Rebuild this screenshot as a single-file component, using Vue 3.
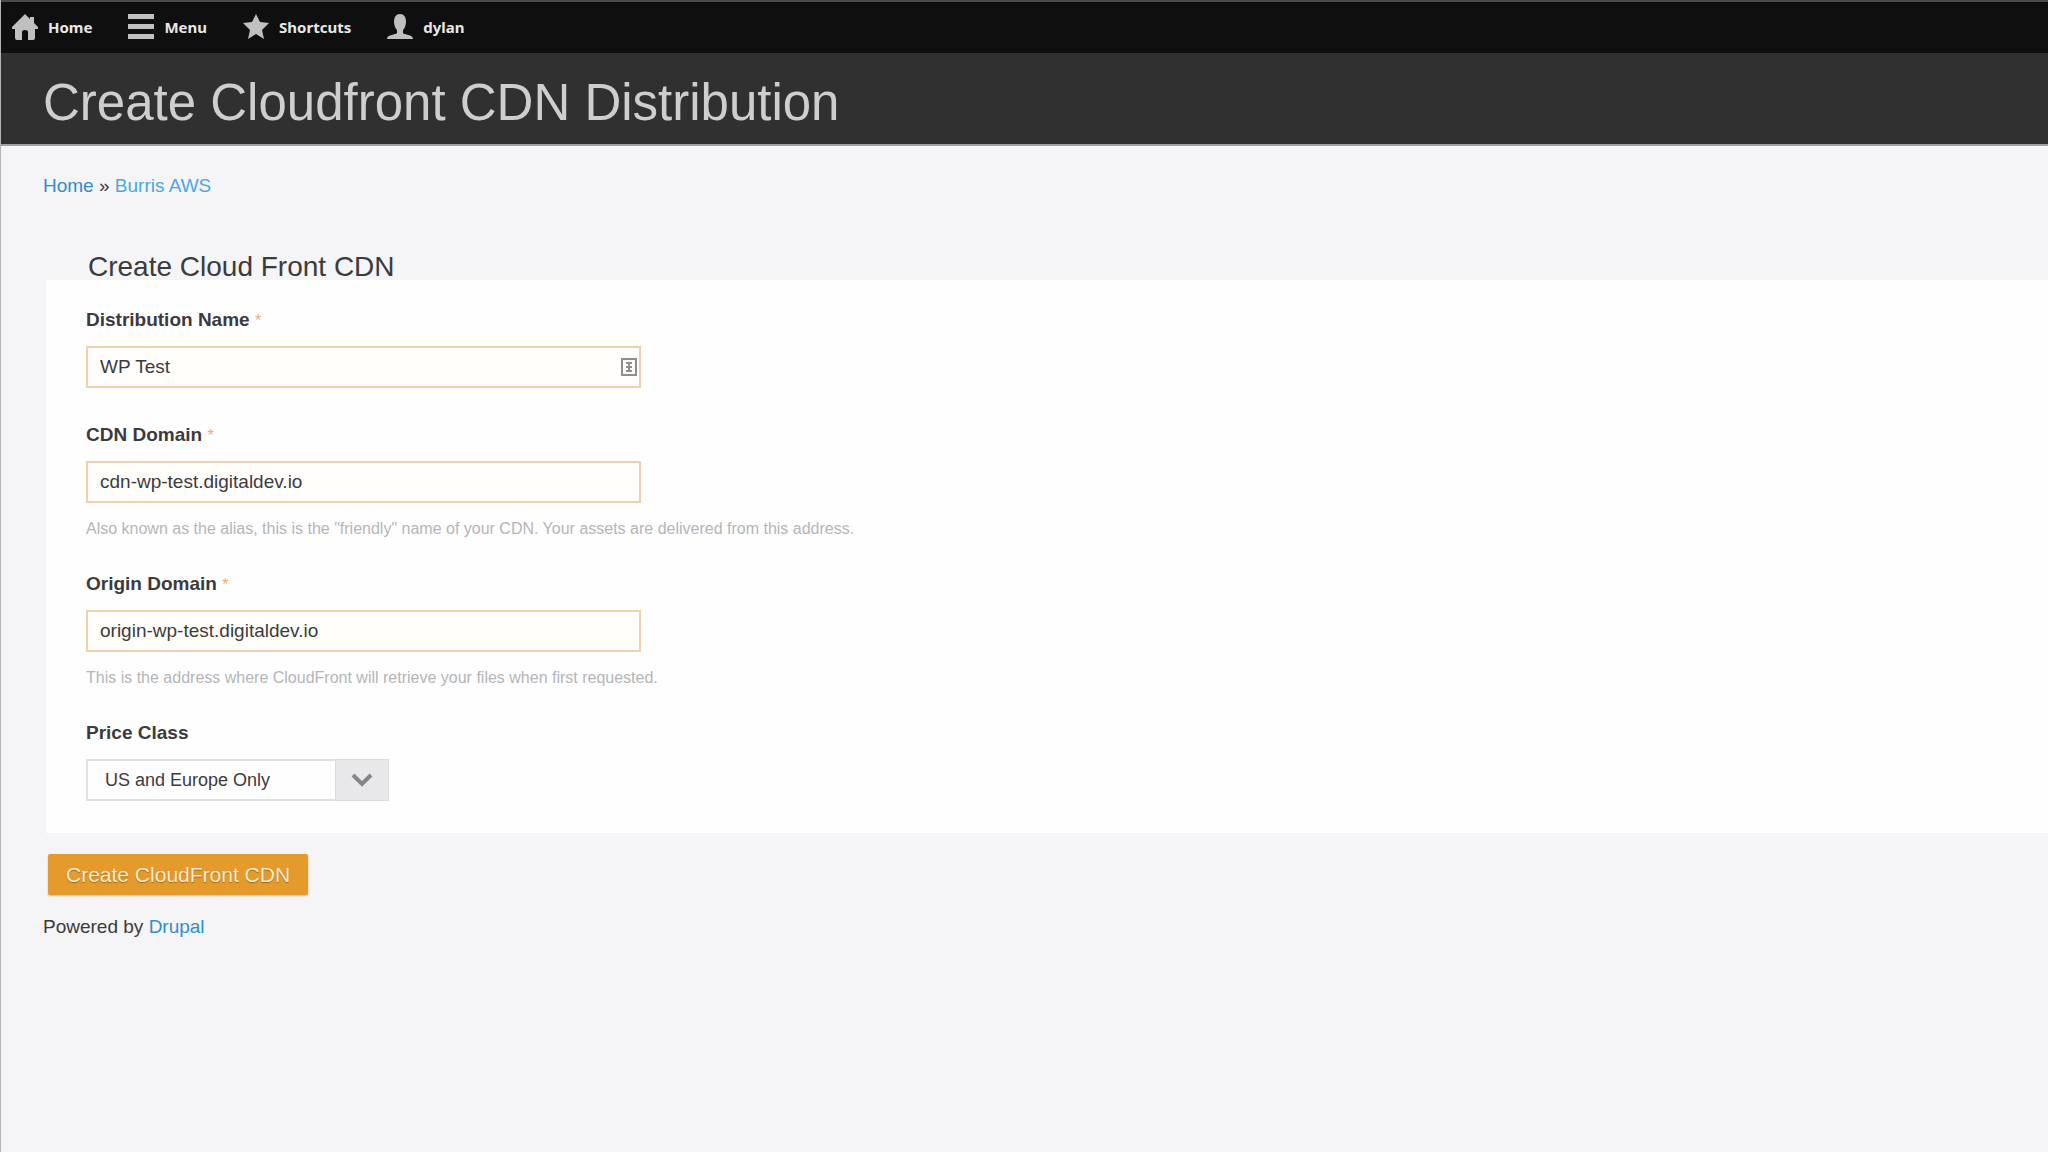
<template>
  <div class="page">
    <nav class="toolbar">
      <a v-for="item in toolbarItems" :key="item.label" href="#" class="toolbar-item">
        <svg class="toolbar-icon" viewBox="0 0 26 26" aria-hidden="true">
          <path :d="item.icon" fill-rule="evenodd" />
        </svg>
        <span>{{ item.label }}</span>
      </a>
    </nav>

    <header class="page-header">
      <h1>Create Cloudfront CDN Distribution</h1>
    </header>

    <main class="content">
      <div class="breadcrumb">
        <a href="#">Home</a> » <a href="#" class="crumb-light">Burris AWS</a>
      </div>

      <form @submit.prevent>
        <h2 class="panel-title">Create Cloud Front CDN</h2>
        <section class="panel">
          <div v-for="field in fields" :key="field.id" class="field">
            <label :for="field.id">{{ field.label }} <span class="required">*</span></label>
            <div class="input-wrap">
              <input :id="field.id" v-model="field.value" type="text" />
              <svg v-if="field.autofill" class="autofill" viewBox="0 0 16 18" aria-hidden="true">
                <rect x="1" y="1" width="14" height="16" />
                <path d="M5 5h6M8 4v10M5 9h6M5 13h6" />
              </svg>
            </div>
            <p v-if="field.help" class="help">{{ field.help }}</p>
          </div>

          <div class="field">
            <label for="price-class">Price Class</label>
            <div class="select-wrap">
              <select id="price-class" v-model="priceClass">
                <option>US and Europe Only</option>
                <option>All Edge Locations</option>
              </select>
              <span class="select-arrow">
                <svg viewBox="0 0 22 14" aria-hidden="true">
                  <path d="M2 2l9 9 9-9" />
                </svg>
              </span>
            </div>
          </div>
        </section>

        <button type="submit" class="submit-btn">Create CloudFront CDN</button>
      </form>

      <footer class="powered">Powered by <a href="#">Drupal</a></footer>
    </main>
  </div>
</template>

<script setup>
import { ref } from "vue";

const toolbarItems = [
  {
    label: "Home",
    icon: "M13 0L18 5V3H22V9L26 13V15H23V24Q23 26 21 26H16V18Q16 16 13 16Q10 16 10 18V26H5Q3 26 3 24V15H0V13Z",
  },
  {
    label: "Menu",
    icon: "M0 0H26V5H0ZM0 10H26V15H0ZM0 20H26V25H0Z",
  },
  {
    label: "Shortcuts",
    icon: "M13 0L17 8L26 9L19 16L21 25L13 20L5 25L7 16L0 9L9 8Z",
  },
  {
    label: "dylan",
    icon: "M13 0C17 0 19 3 19 8C19 12 17 15 16 16V19C17 21 26 20 26 25H0C0 20 9 21 10 19V16C9 15 7 12 7 8C7 3 9 0 13 0Z",
  },
];

const fields = ref([
  {
    id: "distribution-name",
    label: "Distribution Name",
    value: "WP Test",
    autofill: true,
  },
  {
    id: "cdn-domain",
    label: "CDN Domain",
    value: "cdn-wp-test.digitaldev.io",
    help: 'Also known as the alias, this is the "friendly" name of your CDN. Your assets are delivered from this address.',
  },
  {
    id: "origin-domain",
    label: "Origin Domain",
    value: "origin-wp-test.digitaldev.io",
    help: "This is the address where CloudFront will retrieve your files when first requested.",
  },
]);

const priceClass = ref("US and Europe Only");
</script>

<style>
body {
  margin: 0;
  background: #f5f4f7;
}
</style>

<style scoped>
.page {
  box-sizing: border-box;
  min-height: 100vh;
  border-left: 1px solid #b4b4b4;
  background: #f5f4f7;
  color: #3b3b3d;
  font-family: "Liberation Sans", Arial, sans-serif;
  font-size: 19px;
  line-height: 24px;
}

a {
  color: #2f8fcb;
  text-decoration: none;
}

.toolbar {
  display: flex;
  gap: 36px;
  box-sizing: border-box;
  height: 53px;
  padding: 0 11px 2px;
  border-top: 2px solid #4a4a4a;
  background: #0f0f0f;
}

.toolbar-item {
  display: flex;
  align-items: center;
  gap: 10px;
  color: #e8e8e8;
  font-family: "Noto Sans", "Open Sans", sans-serif;
  font-size: 15px;
  font-weight: 700;
}

.toolbar-icon {
  width: 26px;
  height: 26px;
  fill: #c0c0c0;
}

.page-header {
  box-sizing: border-box;
  height: 93px;
  padding: 18px 42px 0;
  border-bottom: 2px solid #a0a0a0;
  background: #303030;
}

h1 {
  margin: 0;
  color: #cecece;
  font-size: 51px;
  font-weight: 400;
  line-height: 64px;
}

.content {
  padding: 28px 0 0 42px;
}

.crumb-light {
  color: #4aa9de;
}

.panel-title {
  margin: 56px 0 0 45px;
  font-size: 28px;
  font-weight: 400;
  line-height: 26px;
}

.panel {
  margin-left: 3px;
  padding: 28px 40px 32px;
  background: #fefefe;
}

.field + .field {
  margin-top: 35px;
}

.field:has(.help) + .field {
  margin-top: 31px;
}

label {
  display: block;
  margin-bottom: 14px;
  font-size: 19px;
  font-weight: 700;
}

.required {
  color: #f0a873;
  font-size: 16px;
  font-weight: 400;
  line-height: 1;
}

.input-wrap {
  position: relative;
  max-width: 555px;
}

input {
  display: block;
  box-sizing: border-box;
  width: 100%;
  height: 42px;
  padding: 0 12px;
  border: 2px solid #edd3ac;
  border-radius: 0;
  background: #fffefb;
  color: #3b3b3d;
  font-family: inherit;
  font-size: 19px;
}

.autofill {
  position: absolute;
  top: 12px;
  right: 4px;
  width: 16px;
  height: 18px;
  fill: none;
  stroke: #8d8d92;
  stroke-width: 2;
}

.help {
  margin: 14px 0 0;
  color: #b5b5b8;
  font-size: 16px;
}

.select-wrap {
  position: relative;
  width: 303px;
}

select {
  display: block;
  box-sizing: border-box;
  width: 100%;
  height: 42px;
  padding: 0 60px 0 17px;
  border: 2px solid #e2e2e4;
  border-radius: 0;
  appearance: none;
  background: #fefefe;
  color: #3b3b3d;
  font-family: inherit;
  font-size: 18px;
}

.select-arrow {
  position: absolute;
  top: 0;
  right: 0;
  display: flex;
  align-items: center;
  justify-content: center;
  box-sizing: border-box;
  width: 54px;
  height: 42px;
  border: 1px solid #dcdcde;
  background: #e8e8ea;
  pointer-events: none;
}

.select-arrow svg {
  width: 22px;
  height: 14px;
  fill: none;
  stroke: #858588;
  stroke-width: 4;
}

.submit-btn {
  display: block;
  height: 41px;
  margin: 21px 0 0 5px;
  padding: 0 18px;
  border: 0;
  border-radius: 2px;
  background: #e49b2c;
  box-shadow: 0 1px 2px #d9b98a;
  color: #fbeacb;
  font-family: inherit;
  font-size: 21px;
  line-height: 24px;
  text-shadow: 0 1px 1px #9c6a1c;
}

.powered {
  margin-top: 20px;
}
</style>
